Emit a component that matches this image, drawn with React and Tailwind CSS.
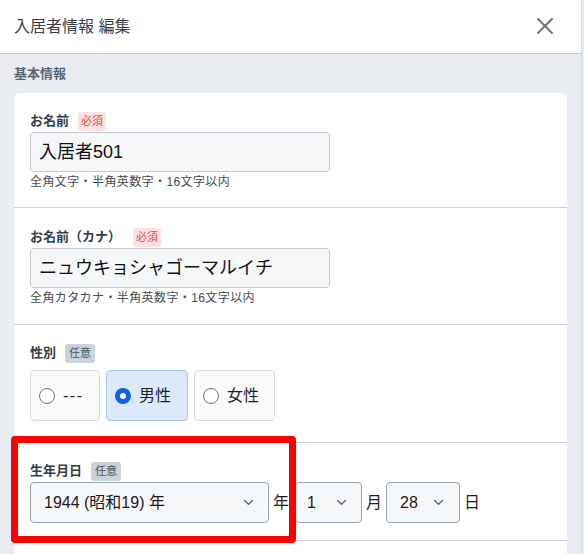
import React from "react";

const FONT = { fontFamily: '"Liberation Sans", "Noto Sans CJK JP", sans-serif' };

function Required() {
  return (
    <span className="inline-flex h-[19px] items-center rounded-[3px] bg-[#fde1e1] px-[3px] text-[11px] leading-none text-[#e5484d]">
      必須
    </span>
  );
}

function Optional() {
  return (
    <span className="inline-flex h-[19px] items-center rounded-[3px] bg-[#cad2da] px-[4px] text-[11px] leading-none text-[#4a5561]">
      任意
    </span>
  );
}

function Label({ text, badge, gap = "gap-[9px]" }) {
  return (
    <div className={`flex h-5 items-center ${gap}`}>
      <span className="text-[13px] font-bold leading-5 text-[#333d48]">{text}</span>
      {badge}
    </div>
  );
}

function Chevron() {
  return (
    <svg width="11" height="7" viewBox="0 0 11 7" fill="none">
      <path d="M1.5 1.5 L5.5 5.2 L9.5 1.5" stroke="#5b6673" strokeWidth="1.4" strokeLinecap="round" strokeLinejoin="round" />
    </svg>
  );
}

function Select({ value, w, pl, pr }) {
  return (
    <div
      className={`flex h-[41px] items-center justify-between rounded-[4px] border border-[#9aa5b2] bg-[#f6f7f9] ${w} ${pl} ${pr}`}
    >
      <span className="text-[16px] leading-none text-[#1a1a1a]">{value}</span>
      <Chevron />
    </div>
  );
}

function Radio({ label, checked, w, extra = "" }) {
  return (
    <div
      className={`flex h-[51px] items-center gap-2 rounded-[4px] border pl-2 ${w} ${
        checked ? "border-[#a9c7f3] bg-[#dde9fb]" : "border-[#d7dce2] bg-[#fbfbfc]"
      }`}
    >
      {checked ? (
        <span className="flex h-4 w-4 items-center justify-center rounded-full bg-[#0b63e5]">
          <span className="h-[6px] w-[6px] rounded-full bg-white" />
        </span>
      ) : (
        <span className="h-4 w-4 rounded-full border border-[#6b7480] bg-white" />
      )}
      <span className={`text-[16px] leading-none text-[#1f1f1f] ${extra}`}>{label}</span>
    </div>
  );
}

export default function App() {
  return (
    <div className="relative h-[554px] w-[584px] overflow-hidden bg-[#e9edf1]" style={FONT}>
      <div className="h-[554px] w-[582px] border-r border-[#d3d9df]">
        {/* header */}
        <div className="flex h-[54px] items-center justify-between border-b border-[#c8cfd6] bg-white pl-[14px] pr-[28px]">
          <span className="text-[16px] leading-none text-[#3b4047]">入居者情報 編集</span>
          <svg width="16" height="16" viewBox="0 0 16 16" fill="none" className="mb-[2px]">
            <path d="M1 1 L15 15 M15 1 L1 15" stroke="#6b7585" strokeWidth="2" strokeLinecap="round" />
          </svg>
        </div>
        {/* body */}
        <div className="bg-[#e9edf1] pt-[12px]">
          <div className="pl-[14px] text-[13px] font-bold leading-4 text-[#5a6572]">基本情報</div>
          <div className="ml-[14px] mt-[11px] h-[600px] w-[553px] rounded-t-[6px] bg-white">
            {/* row 1 */}
            <div className="border-b border-[#ccd3da] px-4 pb-[17px] pt-[18px]">
              <Label text="お名前" badge={<Required />} />
              <div className="mt-[1px] flex h-10 w-[300px] items-center rounded-[4px] border border-[#c4cbd4] bg-[#f6f7f9] pl-2">
                <span className="text-[18px] leading-none text-[#111]">入居者501</span>
              </div>
              <div className="mt-[2px] text-[12px] leading-4 tracking-[0.4px] text-[#444b53]">全角文字・半角英数字・16文字以内</div>
            </div>
            {/* row 2 */}
            <div className="border-b border-[#ccd3da] px-4 pb-[18px] pt-[19px]">
              <Label text="お名前（カナ）" badge={<Required />} gap="gap-[12px]" />
              <div className="mt-[1px] flex h-10 w-[300px] items-center rounded-[4px] border border-[#c4cbd4] bg-[#f6f7f9] pl-2">
                <span className="text-[18px] leading-none text-[#111]">ニュウキョシャゴーマルイチ</span>
              </div>
              <div className="mt-[2px] text-[12px] leading-4 tracking-[0.4px] text-[#444b53]">全角カタカナ・半角英数字・16文字以内</div>
            </div>
            {/* row 3 */}
            <div className="border-b border-[#ccd3da] px-4 pb-[21px] pt-[18px]">
              <Label text="性別" badge={<Optional />} />
              <div className="mt-[7px] flex gap-[6px]">
                <Radio label="---" w="w-[70px]" extra="tracking-[1.5px]" />
                <Radio label="男性" checked w="w-[82px]" />
                <Radio label="女性" w="w-[81px]" />
              </div>
            </div>
            {/* row 4 */}
            <div className="border-b border-[#ccd3da] px-4 pb-[17px] pt-[18px]">
              <Label text="生年月日" badge={<Optional />} />
              <div className="mt-[1px] flex items-center gap-1">
                <Select value="1944 (昭和19) 年" w="w-[239px]" pl="pl-[13px]" pr="pr-[14px]" />
                <span className="mr-[2px] text-[16px] leading-none text-[#1f1f1f]">年</span>
                <Select value="1" w="w-[67px]" pl="pl-[11px]" pr="pr-[14px]" />
                <span className="text-[16px] leading-none text-[#1f1f1f]">月</span>
                <Select value="28" w="w-[74px]" pl="pl-[13px]" pr="pr-[15px]" />
                <span className="text-[16px] leading-none text-[#1f1f1f]">日</span>
              </div>
            </div>
          </div>
        </div>
      </div>
      {/* annotation overlay */}
      <div className="pointer-events-none absolute left-[11px] top-[436px] h-[107px] w-[285px] rounded-[4px] border-[7px] border-[#ff0000]" />
    </div>
  );
}
